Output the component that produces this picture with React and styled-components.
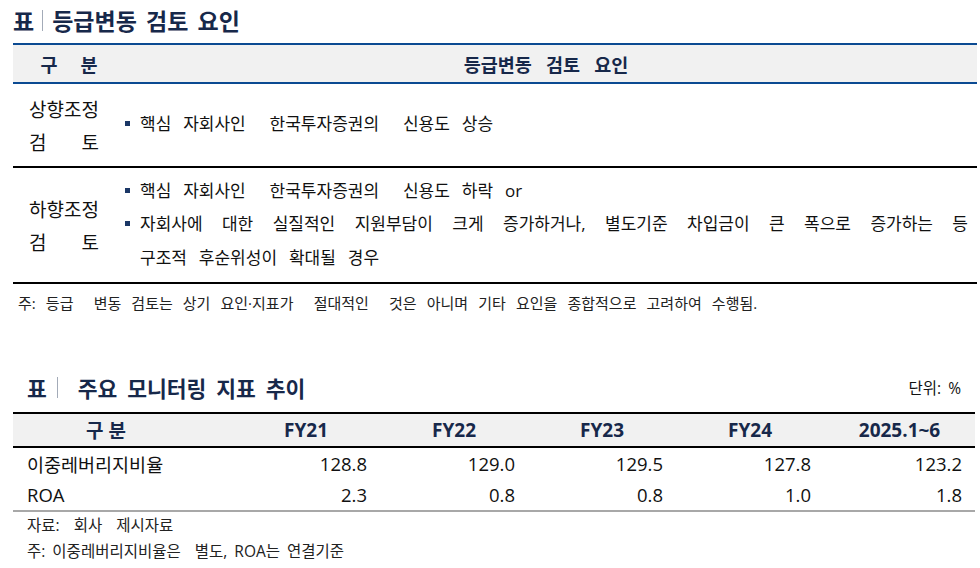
import React from "react";
import styled, { createGlobalStyle } from "styled-components";

const GlobalStyle = createGlobalStyle`
  body {
    margin: 0;
    background: #fff;
    font-family: "Open Sans", "Noto Sans CJK KR", sans-serif;
    color: #111;
  }
`;

const NAVY = "#17284a";
const BLUE = "#0b4a92";

const Page = styled.div`
  width: 980px;
  height: 568px;
  box-sizing: border-box;
  padding: 5px 0 0 13px;
  overflow: hidden;
`;

const TitleBar = styled.div`
  display: flex;
  align-items: center;
  justify-content: space-between;
  height: 30px;
  width: ${(p) => p.$width || 964}px;
  box-sizing: border-box;
  padding: 0 14px 0 ${(p) => p.$indent || 0}px;
  margin-top: ${(p) => p.$top || 0}px;
`;

const TitleText = styled.div`
  display: flex;
  align-items: center;
  font-family: "Noto Sans CJK KR", sans-serif;
  font-size: ${(p) => p.$size}px;
  font-weight: 700;
  color: ${NAVY};
  white-space: pre;
  word-spacing: ${(p) => p.$ws || 0}px;
`;

const Sep = styled.span`
  width: 1px;
  height: 21px;
  background: #a3abb8;
  margin: 0 ${(p) => p.$right}px 0 ${(p) => p.$left}px;
`;

const Unit = styled.div`
  font-size: 15.5px;
  color: #111;
  white-space: pre;
  word-spacing: 3px;
`;

/* ---- table 1 ---- */
const ReviewTable = styled.div`
  display: grid;
  grid-template-columns: 102px 1fr;
  width: 964px;
  margin-top: 8px;
  border-top: 2px solid ${BLUE};
`;

const ReviewHead = styled.div`
  height: 37px;
  background: #f1f1f1;
  border-bottom: 2px solid ${BLUE};
  display: flex;
  align-items: center;
  justify-content: center;
  font-family: "Noto Sans CJK KR", sans-serif;
  font-size: 18.5px;
  font-weight: 700;
  color: ${NAVY};
  white-space: pre;
  word-spacing: ${(p) => p.$ws || 0}px;
  padding-left: ${(p) => p.$shift || 0}px;
`;

const LabelCell = styled.div`
  height: ${(p) => p.$h}px;
  border-bottom: 2px solid #000;
  display: flex;
  flex-direction: column;
  align-items: center;
  justify-content: center;
  box-sizing: border-box;
`;

const LabelLine = styled.div`
  width: 70px;
  display: flex;
  justify-content: ${(p) => (p.$spread ? "space-between" : "center")};
  font-family: "Noto Sans CJK KR", sans-serif;
  font-size: 19px;
  line-height: 33px;
  color: #111;
`;

const ContentCell = styled.div`
  height: ${(p) => p.$h}px;
  border-bottom: 2px solid #000;
  display: flex;
  flex-direction: column;
  justify-content: center;
  padding: 0 9px 2px 10px;
  box-sizing: border-box;
`;

const Bullet = styled.div`
  display: flex;
  align-items: flex-start;
`;

const Mark = styled.span`
  flex: none;
  width: 15px;
  height: 33px;
  display: flex;
  align-items: center;
  &::before {
    content: "";
    width: 5px;
    height: 5px;
    background: #1b3766;
  }
`;

const BulletText = styled.div`
  flex: 1;
  font-size: 17px;
  line-height: 33.5px;
  white-space: pre-wrap;
  word-spacing: 7.5px;
  color: #111;
`;

const JustLine = styled.div`
  text-align: justify;
  text-align-last: justify;
  white-space: normal;
  word-spacing: 0;
`;

const Note = styled.div`
  font-size: ${(p) => p.$size || 15}px;
  line-height: ${(p) => p.$lh || 20}px;
  color: #222;
  white-space: pre;
  word-spacing: ${(p) => p.$ws || 4}px;
  padding-left: ${(p) => p.$indent || 5}px;
  margin-top: ${(p) => p.$top || 0}px;
`;

/* ---- table 2 ---- */
const TrendTable = styled.div`
  display: grid;
  grid-template-columns: 219px repeat(4, 148px) 1fr;
  width: 962px;
  margin-top: 10px;
  border-top: 2px solid #000;
  border-bottom: 2px solid #a8a8a8;
`;

const TrendHead = styled.div`
  height: 32px;
  background: #f1f1f1;
  border-bottom: 2px solid #000;
  display: flex;
  align-items: center;
  justify-content: center;
  padding-right: ${(p) => p.$pr || 0}px;
  font-size: 19px;
  font-weight: 700;
  color: ${NAVY};
  white-space: pre;
`;

const TrendCell = styled.div`
  height: ${(p) => p.$h}px;
  display: flex;
  align-items: center;
  justify-content: ${(p) => (p.$label ? "flex-start" : "flex-end")};
  padding: ${(p) => (p.$label ? "0 0 0 14px" : "0 13px 0 0")};
  font-size: 18.5px;
  color: #111;
`;

const columns = ["FY21", "FY22", "FY23", "FY24", "2025.1~6"];
const rows = [
  { name: "이중레버리지비율", values: ["128.8", "129.0", "129.5", "127.8", "123.2"], h: 31 },
  { name: "ROA", values: ["2.3", "0.8", "0.8", "1.0", "1.8"], h: 31 },
];

const App = () => {
  return (
    <>
      <GlobalStyle />
      <Page>
        <TitleBar>
          <TitleText $size={23} $ws={4}>
            표<Sep $left={8} $right={9} />등급변동 검토 요인
          </TitleText>
        </TitleBar>

        <ReviewTable>
          <ReviewHead $ws={19} $shift={10}>구 분</ReviewHead>
          <ReviewHead $ws={10}>등급변동 검토 요인</ReviewHead>

          <LabelCell $h={84}>
            <LabelLine>상향조정</LabelLine>
            <LabelLine $spread>
              <span>검</span>
              <span>토</span>
            </LabelLine>
          </LabelCell>
          <ContentCell $h={84}>
            <Bullet>
              <Mark />
              <BulletText>핵심 자회사인  한국투자증권의  신용도 상승</BulletText>
            </Bullet>
          </ContentCell>

          <LabelCell $h={116}>
            <LabelLine>하향조정</LabelLine>
            <LabelLine $spread>
              <span>검</span>
              <span>토</span>
            </LabelLine>
          </LabelCell>
          <ContentCell $h={116}>
            <Bullet>
              <Mark />
              <BulletText>핵심 자회사인  한국투자증권의  신용도 하락 or</BulletText>
            </Bullet>
            <Bullet>
              <Mark />
              <BulletText>
                <JustLine>
                  자회사에 대한 실질적인 지원부담이 크게 증가하거나, 별도기준 차입금이 큰 폭으로 증가하는 등
                </JustLine>
                구조적 후순위성이 확대될 경우
              </BulletText>
            </Bullet>
          </ContentCell>
        </ReviewTable>

        <Note $top={9} $ws={6.2}>
          주: 등급  변동 검토는 상기 요인·지표가  절대적인  것은 아니며 기타 요인을 종합적으로 고려하여 수행됨.
        </Note>

        <TitleBar $top={59} $indent={14} $width={962}>
          <TitleText $size={21.5} $ws={5}>
            표<Sep $left={10} $right={20} />주요 모니터링 지표 추이
          </TitleText>
          <Unit>단위: %</Unit>
        </TitleBar>

        <TrendTable>
          <TrendHead $pr={33}>구 분</TrendHead>
          {columns.map((c) => (
            <TrendHead key={c}>{c}</TrendHead>
          ))}
          {rows.map((r) => (
            <React.Fragment key={r.name}>
              <TrendCell $label $h={r.h}>{r.name}</TrendCell>
              {r.values.map((v, i) => (
                <TrendCell key={i} $h={r.h}>{v}</TrendCell>
              ))}
            </React.Fragment>
          ))}
        </TrendTable>

        <Note $lh={26} $indent={14} $ws={3} $size={15.5}>자료:  회사  제시자료</Note>
        <Note $lh={26} $indent={14} $ws={3} $size={15.5}>주: 이중레버리지비율은  별도, ROA는 연결기준</Note>
      </Page>
    </>
  );
};

export default App;
